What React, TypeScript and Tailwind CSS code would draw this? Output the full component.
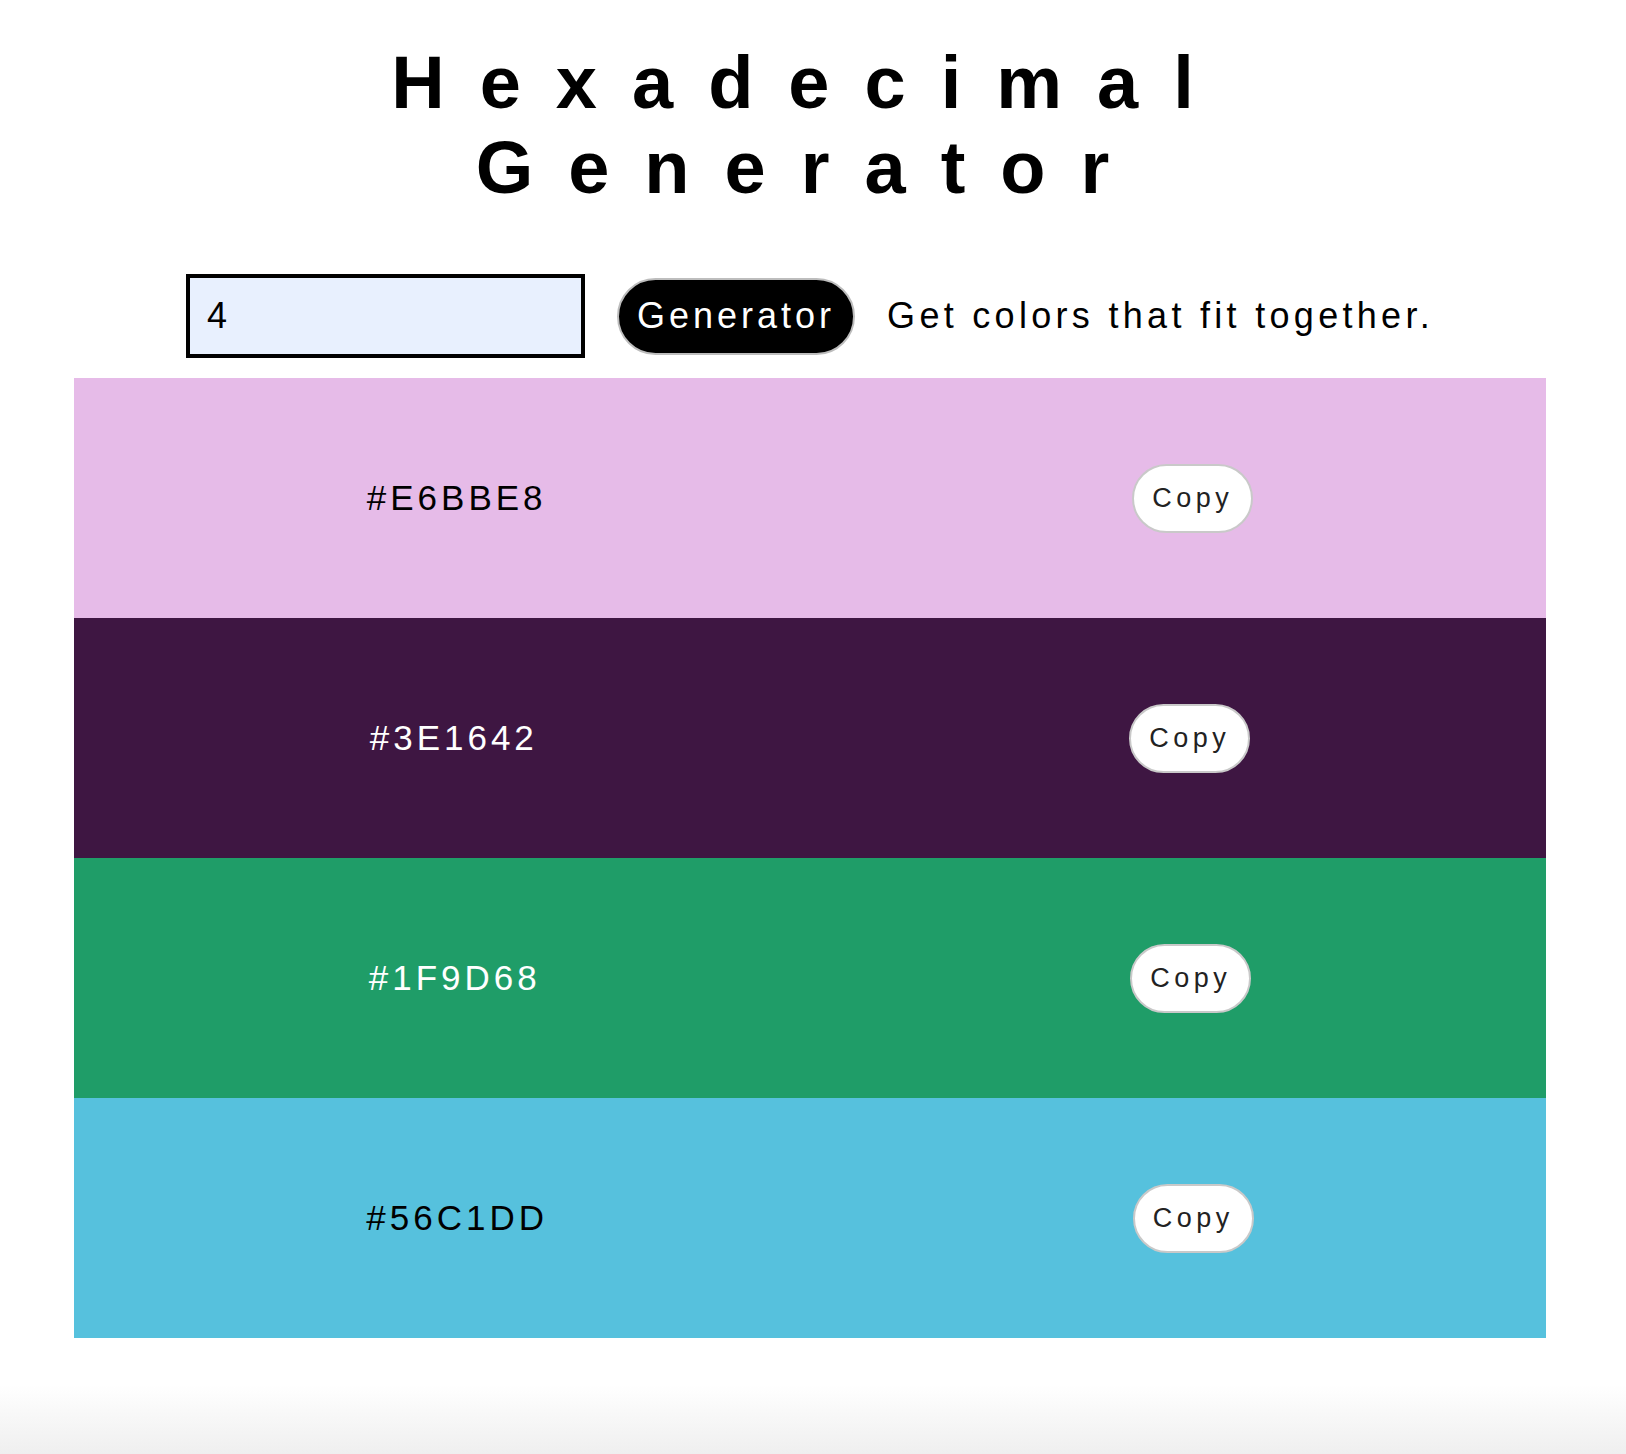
type Swatch = {
  hex: string
  textColor: string
}

const swatches: Swatch[] = [
  { hex: '#E6BBE8', textColor: 'text-black' },
  { hex: '#3E1642', textColor: 'text-white' },
  { hex: '#1F9D68', textColor: 'text-white' },
  { hex: '#56C1DD', textColor: 'text-black' }
]

function SwatchRow({ swatch }: { swatch: Swatch }): React.JSX.Element {
  return (
    <div
      className="flex h-[240px] items-center justify-around"
      style={{ backgroundColor: swatch.hex }}
    >
      <p className={`text-[35px] tracking-[4px] ${swatch.textColor}`}>{swatch.hex}</p>
      <button className="flex h-[69px] items-center rounded-full border-2 border-[#c9c9c9] bg-white px-[18px] text-[27px] tracking-[4.5px] text-[#222]">
        Copy
      </button>
    </div>
  )
}

export default function App(): React.JSX.Element {
  return (
    <div className="flex min-h-screen w-full flex-col bg-white font-['Liberation_Sans',Arial,sans-serif] text-black">
      <div className="w-[1620px]">
        <h1 className="pt-[40px] text-center text-[74px] font-bold leading-[85px] tracking-[35px]">
          <span className="block">Hexadecimal</span>
          <span className="block">Generator</span>
        </h1>

        <div className="mt-[64px] flex items-center justify-center gap-[32px]">
          <div className="flex h-[84px] w-[399px] items-center border-4 border-black bg-[#e8f0fe] pl-[17px] text-[36px]">
            4
          </div>
          <button className="flex h-[77px] items-center rounded-full border-2 border-[#bdbdbd] bg-black px-[18px] text-[36px] tracking-[4px] text-white">
            Generator
          </button>
          <p className="text-[36px] tracking-[4.3px]">Get colors that fit together.</p>
        </div>

        <div className="mx-auto mt-[20px] w-[1472px]">
          {swatches.map((swatch) => (
            <SwatchRow key={swatch.hex} swatch={swatch} />
          ))}
        </div>
      </div>
      <div className="flex-1 bg-linear-to-b from-white from-40% to-[#efefef]" />
    </div>
  )
}
